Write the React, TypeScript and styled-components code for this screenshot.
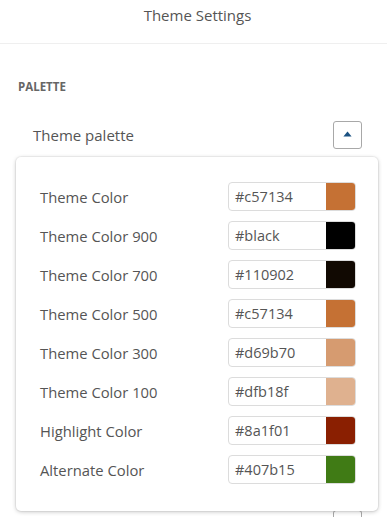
import React from "react";
import styled, { createGlobalStyle } from "styled-components";

interface IPaletteColor {
  label: string;
  value: string;
  swatch: string;
}

const PALETTE: IPaletteColor[] = [
  { label: "Theme Color", value: "#c57134", swatch: "#c57134" },
  { label: "Theme Color 900", value: "#black", swatch: "#000000" },
  { label: "Theme Color 700", value: "#110902", swatch: "#110902" },
  { label: "Theme Color 500", value: "#c57134", swatch: "#c57134" },
  { label: "Theme Color 300", value: "#d69b70", swatch: "#d69b70" },
  { label: "Theme Color 100", value: "#dfb18f", swatch: "#dfb18f" },
  { label: "Highlight Color", value: "#8a1f01", swatch: "#8a1f01" },
  { label: "Alternate Color", value: "#407b15", swatch: "#407b15" },
];

const ArrowUp = () => (
  <svg width="9" height="6" viewBox="0 0 9 6">
    <path d="M4.5 0.5 L8.6 5.6 L0.4 5.6 Z" fill="#1b5282" />
  </svg>
);

const App = () => {
  return (
    <>
      <GlobalStyle />
      <Page>
        <Header>Theme Settings</Header>
        <Body>
          <SectionTitle>PALETTE</SectionTitle>
          <SectionList>
            <SectionRow>
              <SectionLabel>Theme palette</SectionLabel>
              <ToggleButton>
                <ArrowUp />
              </ToggleButton>
              <Dropdown>
                {PALETTE.map((c) => (
                  <ColorRow key={c.label}>
                    <ColorLabel>{c.label}</ColorLabel>
                    <ColorField>
                      <ColorInput>{c.value}</ColorInput>
                      <Swatch $color={c.swatch} />
                    </ColorField>
                  </ColorRow>
                ))}
              </Dropdown>
            </SectionRow>
            {/* next section row, mostly covered by the open dropdown */}
            <SectionRow $covered>
              <SectionLabel>Headline Color</SectionLabel>
              <ToggleButton />
            </SectionRow>
          </SectionList>
        </Body>
      </Page>
    </>
  );
};

export default App;

const GlobalStyle = createGlobalStyle`
  html, body {
    margin: 0;
    padding: 0;
    background: #fff;
    overflow: hidden;
  }
  body {
    font-family: "Open Sans", "Noto Sans", sans-serif;
    color: #555;
  }
`;

const Page = styled.div`
  width: 387px;
  height: 517px;
  overflow: hidden;
`;

const Header = styled.div`
  height: 44px;
  box-sizing: border-box;
  padding: 4px 0 0 8px;
  text-align: center;
  font-size: 15px;
  line-height: 22px;
  color: #555;
  border-bottom: 1px solid #efefef;
`;

const Body = styled.div`
  padding: 35px 25px 0 18px;
`;

const SectionTitle = styled.div`
  font-size: 11.5px;
  font-weight: 700;
  color: #666;
  line-height: 16px;
`;

const SectionList = styled.div`
  display: flex;
  flex-direction: column;
  margin-top: 26px;
`;

const SectionRow = styled.div<{ $covered?: boolean }>`
  position: relative;
  display: flex;
  align-items: center;
  justify-content: space-between;
  height: 28px;
  padding-left: 15px;
  margin-top: ${(p) => (p.$covered ? "361px" : "0")};
`;

const SectionLabel = styled.div`
  font-size: 15px;
  color: #555;
`;

const ToggleButton = styled.div`
  width: 29px;
  height: 28px;
  box-sizing: border-box;
  border: 1px solid #a8a8a8;
  border-radius: 3px;
  background: #fff;
  display: flex;
  align-items: center;
  justify-content: center;
  padding-bottom: 2px;
`;

const Dropdown = styled.div`
  position: absolute;
  top: 36px;
  left: -2px;
  width: 362px;
  height: 354px;
  box-sizing: border-box;
  padding: 25px 22px 0 24px;
  background: #fff;
  border-radius: 5px;
  box-shadow: 0 1px 4px rgba(0, 0, 0, 0.22), 0 0 0 1px rgba(0, 0, 0, 0.04);
  display: flex;
  flex-direction: column;
  gap: 10px;
  z-index: 2;
`;

const ColorRow = styled.div`
  display: flex;
  align-items: center;
  justify-content: space-between;
  height: 29px;
`;

const ColorLabel = styled.div`
  font-size: 14.8px;
  color: #555;
`;

const ColorField = styled.div`
  display: flex;
  width: 128px;
  height: 29px;
  box-sizing: border-box;
  border: 1px solid #dcdcdc;
  border-radius: 4px;
  overflow: hidden;
`;

const ColorInput = styled.div`
  flex: 1;
  padding-left: 6px;
  font-size: 14.5px;
  line-height: 27px;
  color: #555;
`;

const Swatch = styled.div<{ $color: string }>`
  width: 29px;
  background: ${(p) => p.$color};
`;
